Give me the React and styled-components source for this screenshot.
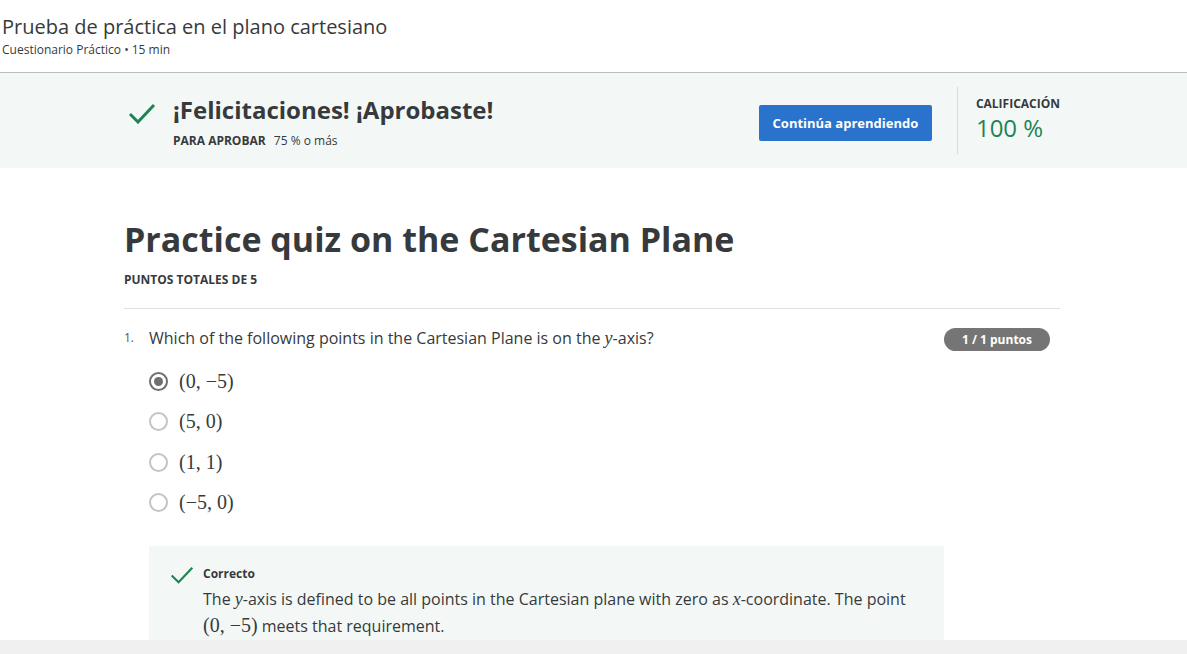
import React from "react";
import styled, { createGlobalStyle } from "styled-components";

const Global = createGlobalStyle`
  html, body { margin: 0; padding: 0; background: #fff; }
  body { font-family: "Open Sans", "Noto Sans", sans-serif; color: #333; }
  * { box-sizing: border-box; }
`;

const Page = styled.div`
  height: 654px;
  overflow: hidden;
  display: flex;
  flex-direction: column;
  position: relative;
`;

const Header = styled.header`
  flex-shrink: 0;
  height: 73px;
  padding: 14px 2px 0;
  border-bottom: 1px solid #bdbdbd;
`;

const PageTitle = styled.h1`
  margin: 0;
  font-size: 20px;
  font-weight: 400;
  line-height: 26px;
  color: #373a3c;
`;

const SubTitle = styled.div`
  font-size: 12px;
  line-height: 16px;
  color: #373a3c;
  margin-top: 2px;
`;

const Banner = styled.section`
  flex-shrink: 0;
  background: #f3f8f6;
  height: 95px;
  display: flex;
  justify-content: center;
  padding-right: 3px;
`;

const BannerInner = styled.div`
  width: 936px;
  display: flex;
  align-items: flex-start;
  padding-left: 4px;
`;

const CheckBox = styled.div`
  width: 45px;
  padding-top: 30px;
  flex-shrink: 0;
`;

const BannerText = styled.div`
  flex: 1;
  padding-top: 21px;
`;

const BannerTitle = styled.div`
  font-size: 24px;
  font-weight: 700;
  line-height: 32px;
  color: #373a3c;
`;

const PassLine = styled.div`
  margin-top: 6px;
  font-size: 12px;
  color: #373a3c;
  b { font-weight: 700; margin-right: 5px; }
`;

const BlueButton = styled.button`
  margin-top: 32px;
  width: 173px;
  height: 36px;
  border: none;
  border-radius: 2px;
  background: #2a73cc;
  color: #fff;
  font-family: "Open Sans", sans-serif;
  font-weight: 700;
  font-size: 13px;
  padding: 0;
`;

const Divider = styled.div`
  width: 1px;
  height: 67px;
  margin: 14px 18px 0 25px;
  background: #dadada;
`;

const Grade = styled.div`
  padding-top: 23px;
`;

const GradeLabel = styled.div`
  font-size: 12px;
  font-weight: 700;
  color: #373a3c;
  line-height: 16px;
`;

const GradeValue = styled.div`
  font-size: 24px;
  color: #1f8354;
  line-height: 24px;
  margin-top: 4px;
`;

const Main = styled.main`
  display: flex;
  justify-content: center;
  flex: 1;
  padding-right: 3px;
`;

const Content = styled.div`
  width: 936px;
  padding-top: 48px;
`;

const QuizTitle = styled.h2`
  margin: 0;
  font-size: 34px;
  font-weight: 700;
  line-height: 46px;
  color: #373a3c;
`;

const Totals = styled.div`
  margin-top: 10px;
  font-size: 12px;
  font-weight: 700;
  color: #373a3c;
  line-height: 16px;
  padding-bottom: 20px;
  border-bottom: 1px solid #e1e1e1;
`;

const Question = styled.div`
  margin-top: 17px;
  display: flex;
  align-items: flex-start;
`;

const QNum = styled.div`
  width: 25px;
  font-size: 12px;
  line-height: 24px;
  color: #555;
`;

const QBody = styled.div`
  flex: 1;
`;

const QText = styled.div`
  font-size: 16px;
  line-height: 24px;
  color: #373a3c;
`;

const Badge = styled.div`
  margin-right: 10px;
  margin-top: 2px;
  width: 106px;
  height: 23px;
  border-radius: 12px;
  background: #757575;
  color: #fff;
  font-size: 12px;
  font-weight: 700;
  display: flex;
  align-items: center;
  justify-content: center;
`;

const MathVar = styled.i`
  font-family: "Liberation Serif", serif;
  font-size: 18px;
  font-style: italic;
`;

const Options = styled.div`
  margin-top: 19px;
  display: flex;
  flex-direction: column;
  gap: 16.5px;
`;

const Option = styled.label`
  display: flex;
  align-items: center;
  gap: 11px;
  height: 24px;
`;

const Radio = styled.span`
  width: 19px;
  height: 19px;
  border-radius: 50%;
  border: 2px solid ${(p) => (p.$on ? "#6f6f6f" : "#c4c4c4")};
  display: flex;
  align-items: center;
  justify-content: center;
  &::after {
    content: "";
    width: 9px;
    height: 9px;
    border-radius: 50%;
    background: ${(p) => (p.$on ? "#6f6f6f" : "transparent")};
  }
`;

const OptText = styled.span`
  font-family: "Liberation Serif", "DejaVu Serif", serif;
  font-size: 20px;
  color: #373a3c;
`;

const Feedback = styled.div`
  margin-top: 31px;
  width: 795px;
  background: #f3f8f6;
  padding: 20px 20px 20px 21px;
  display: flex;
  gap: 9px;
  svg { flex-shrink: 0; }
`;

const FbText = styled.div``;

const FbLabel = styled.div`
  font-size: 12px;
  font-weight: 700;
  color: #373a3c;
  line-height: 16px;
`;

const FbBody = styled.div`
  margin-top: 4px;
  font-size: 16px;
  line-height: 26px;
  color: #373a3c;
`;

const BottomBar = styled.div`
  position: absolute;
  left: 0;
  right: 0;
  bottom: 0;
  height: 14px;
  background: #f0f0f0;
`;

const Check = ({ size = 28, w = 3 }) => (
  <svg width={size} height={size * 0.75} viewBox="0 0 28 21">
    <path d="M2 11 L10 19 L26 2" fill="none" stroke="#1f8354" strokeWidth={w} />
  </svg>
);

const options = ["(0, −5)", "(5, 0)", "(1, 1)", "(−5, 0)"];

export default function App() {
  return (
    <Page>
      <Global />
      <Header>
        <PageTitle>Prueba de práctica en el plano cartesiano</PageTitle>
        <SubTitle>Cuestionario Práctico • 15 min</SubTitle>
      </Header>
      <Banner>
        <BannerInner>
          <CheckBox>
            <Check />
          </CheckBox>
          <BannerText>
            <BannerTitle>¡Felicitaciones! ¡Aprobaste!</BannerTitle>
            <PassLine>
              <b>PARA APROBAR</b> 75 % o más
            </PassLine>
          </BannerText>
          <BlueButton>Continúa aprendiendo</BlueButton>
          <Divider />
          <Grade>
            <GradeLabel>CALIFICACIÓN</GradeLabel>
            <GradeValue>100 %</GradeValue>
          </Grade>
        </BannerInner>
      </Banner>
      <Main>
        <Content>
          <QuizTitle>Practice quiz on the Cartesian Plane</QuizTitle>
          <Totals>PUNTOS TOTALES DE 5</Totals>
          <Question>
            <QNum>1.</QNum>
            <QBody>
              <QText>
                Which of the following points in the Cartesian Plane is on the{" "}
                <MathVar>y</MathVar>-axis?
              </QText>
              <Options>
                {options.map((o, i) => (
                  <Option key={o}>
                    <Radio $on={i === 0} />
                    <OptText>{o}</OptText>
                  </Option>
                ))}
              </Options>
              <Feedback>
                <Check size={24} w={2.5} />
                <FbText>
                  <FbLabel>Correcto</FbLabel>
                  <FbBody>
                    The <MathVar>y</MathVar>-axis is defined to be all points in the Cartesian plane with
                    zero as <MathVar>x</MathVar>-coordinate. The point{" "}
                    <OptText>(0, −5)</OptText> meets that requirement.
                  </FbBody>
                </FbText>
              </Feedback>
            </QBody>
            <Badge>1 / 1 puntos</Badge>
          </Question>
        </Content>
      </Main>
      <BottomBar />
    </Page>
  );
}
